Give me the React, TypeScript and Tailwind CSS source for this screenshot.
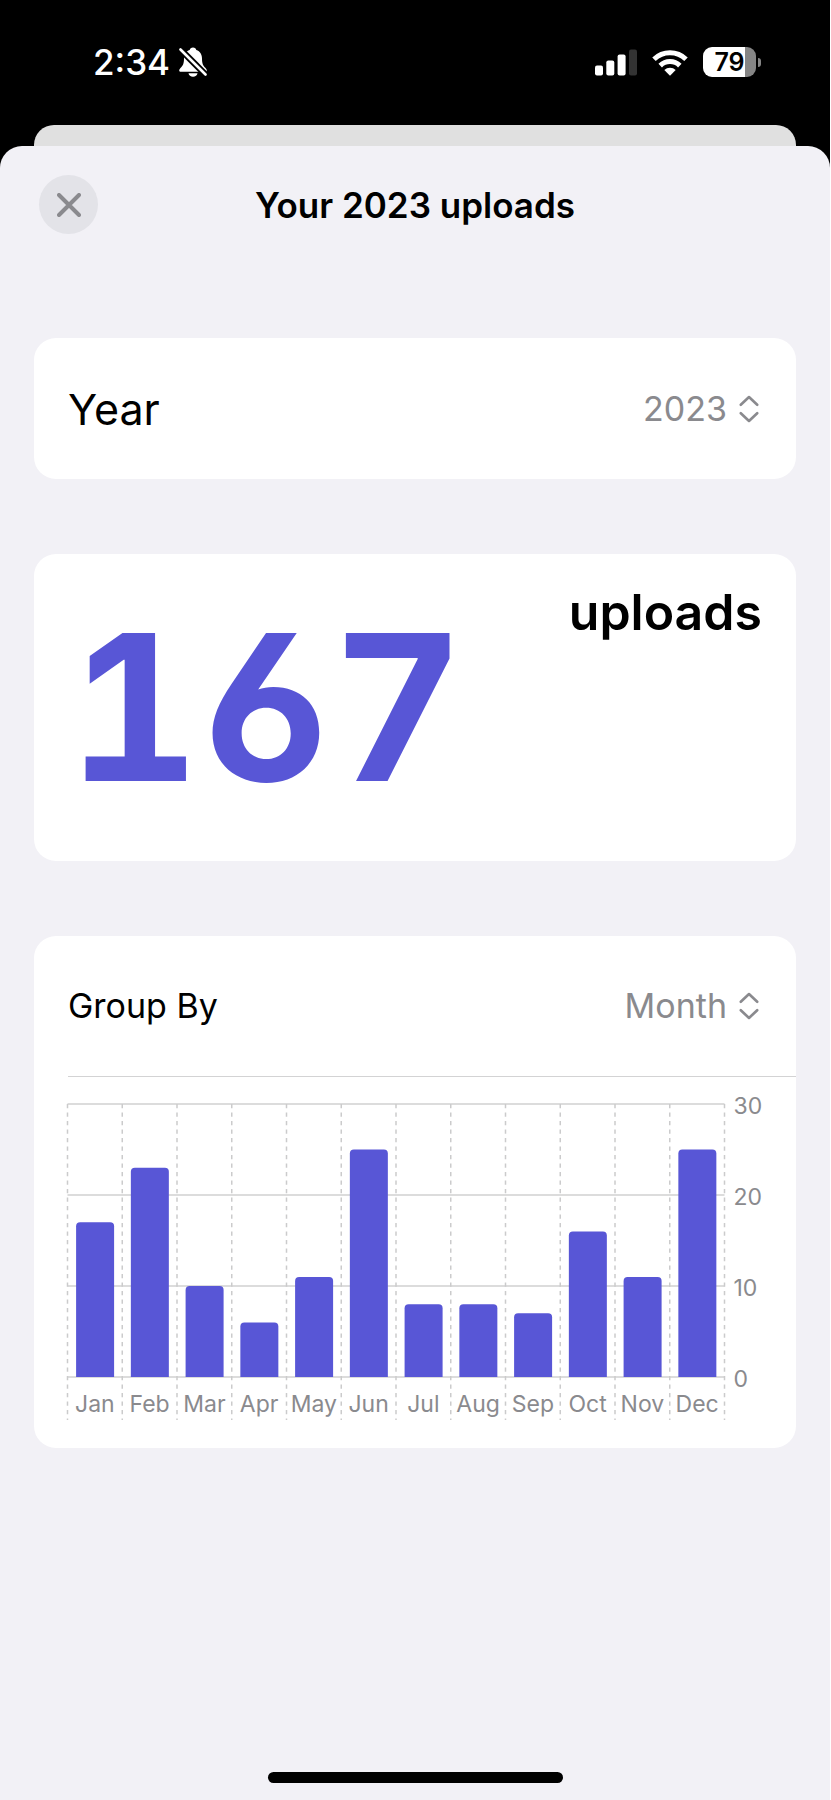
import React, { useState } from "react";

const uploads = [
  { month: "Jan", count: 17 },
  { month: "Feb", count: 23 },
  { month: "Mar", count: 10 },
  { month: "Apr", count: 6 },
  { month: "May", count: 11 },
  { month: "Jun", count: 25 },
  { month: "Jul", count: 8 },
  { month: "Aug", count: 8 },
  { month: "Sep", count: 7 },
  { month: "Oct", count: 16 },
  { month: "Nov", count: 11 },
  { month: "Dec", count: 25 },
];

const total = uploads.reduce((sum, entry) => sum + entry.count, 0);

function BellSlashIcon() {
  return (
    <svg viewBox="0 0 28 30" className="h-[30px] w-[28px]" aria-hidden="true">
      <path
        fill="#fff"
        d="M14 0.5c-1.900 0-3 1-3.300 2.500C6.800 4.200 5 7.600 5 11.500c0 5-1 7-3.300 9.300C.8 21.800.2 22.600.2 23.400c0 .9.700 1.400 1.700 1.400h24.200c1 0 1.700-.5 1.700-1.400 0-.8-.6-1.600-1.500-2.600C24 18.500 23 16.500 23 11.500c0-3.900-1.800-7.300-5.700-8.500C17 1.500 15.900.5 14 .5z"
      />
      <path fill="#fff" d="M9.500 26.300h9c-.3 2.200-2.200 3.500-4.500 3.500s-4.200-1.300-4.500-3.500z" />
      <path stroke="#000" strokeWidth="6.500" d="M-1 0l30 30" />
      <path stroke="#fff" strokeWidth="2.600" strokeLinecap="round" d="M1.500 2.500l25 25" />
    </svg>
  );
}

function SignalIcon() {
  return (
    <svg viewBox="0 0 42 27" className="h-[27px] w-[42px]" aria-hidden="true">
      <rect x="0" y="16.500" width="8" height="10" rx="2" fill="#fff" />
      <rect x="11.300" y="11.500" width="8" height="15" rx="2" fill="#fff" />
      <rect x="22.600" y="5.500" width="8" height="21" rx="2" fill="#fff" />
      <rect x="34" y="0.500" width="8" height="26" rx="2" fill="#333" />
    </svg>
  );
}

function WifiIcon() {
  return (
    <svg viewBox="0 0 36 27" className="h-[27px] w-[36px]" aria-hidden="true">
      <g fill="none" stroke="#fff" strokeWidth="5">
        <path d="M2 10.200a23 23 0 0 1 32 0" />
        <path d="M8.200 16.600a14 14 0 0 1 19.600 0" />
      </g>
      <path fill="#fff" d="M18 26.800l-5.700-5.700a8.200 8.200 0 0 1 11.400 0z" />
    </svg>
  );
}

function Battery() {
  return (
    <div className="flex items-center gap-[2px]" role="img" aria-label="Battery 79 percent">
      <div className="flex h-[30px] w-[53px] items-center justify-center rounded-[9px] bg-[linear-gradient(90deg,#fff_79%,#858585_79%)] text-[25px] leading-none font-semibold text-black">
        79
      </div>
      <div className="h-[9px] w-[3px] rounded-r-full bg-[#858585]" />
    </div>
  );
}

function StatusBar() {
  return (
    <header className="flex h-[125px] items-start justify-between pt-[42px] pr-[69px] pl-[93px] text-white">
      <div className="flex h-[40px] items-center gap-[9px]">
        <time className="text-[35px] leading-none font-medium">2:34</time>
        <BellSlashIcon />
      </div>
      <div className="flex h-[40px] items-center gap-[15px]">
        <SignalIcon />
        <WifiIcon />
        <Battery />
      </div>
    </header>
  );
}

function Picker({ id, options }: { id: string; options: string[] }) {
  const [value, setValue] = useState(options[0]);
  return (
    <div className="relative flex items-center">
      <select
        id={id}
        value={value}
        onChange={(event) => setValue(event.target.value)}
        className="cursor-pointer appearance-none bg-transparent pr-[35px] text-[34px] leading-[44px] text-[#8a8a8e] [text-align-last:right]"
      >
        {options.map((option) => (
          <option key={option}>{option}</option>
        ))}
      </select>
      <svg
        viewBox="0 0 20 28"
        className="pointer-events-none absolute right-[3px] h-[28px] w-[20px]"
        fill="none"
        stroke="#8a8a8e"
        strokeWidth="2.600"
        strokeLinecap="round"
        strokeLinejoin="round"
        aria-hidden="true"
      >
        <path d="M1.800 9.800L10 2l8.200 7.800M1.800 18.200L10 26l8.200-7.800" />
      </svg>
    </div>
  );
}

function UploadsChart() {
  const plotWidth = 657;
  const step = plotWidth / uploads.length;
  const baseline = 273;
  const unit = 9.1;
  return (
    <svg viewBox="0.500 0 694 316" className="block h-auto w-full overflow-visible" role="img" aria-label="Uploads per month">
      {[0, 10, 20, 30].map((tick) => (
        <g key={tick}>
          <line x1="0" x2={plotWidth} y1={baseline - tick * unit} y2={baseline - tick * unit} stroke="#d0d0d1" strokeWidth="1.500" />
          <text x="666" y={baseline - tick * unit + 10} fontSize="23" fill="#8a8a8e">
            {tick}
          </text>
        </g>
      ))}
      {Array.from({ length: uploads.length + 1 }, (_, index) => (
        <line key={index} x1={index * step} x2={index * step} y1="0" y2="316" stroke="#cbcbcc" strokeWidth="1.500" strokeDasharray="4.250 4.250" />
      ))}
      {uploads.map(({ month, count }, index) => {
        const left = index * step + 8.6;
        const top = baseline - count * unit;
        return (
          <g key={month}>
            <path d={`M${left} ${baseline}V${top + 4}q0-4 4-4h30q4 0 4 4V${baseline}z`} fill="#5856d6" />
            <text x={(index + 0.5) * step} y="308" fontSize="23" textAnchor="middle" fill="#8a8a8e">
              {month}
            </text>
          </g>
        );
      })}
    </svg>
  );
}

export default function App() {
  return (
    <div className="min-h-screen bg-white pr-px font-['Inter',sans-serif] text-black">
      <div className="flex min-h-screen flex-col bg-black">
        <StatusBar />
        <div className="mx-[34px] h-[21px] rounded-t-[20px] bg-[#e0e0e0]" />
        <main className="flex flex-1 flex-col rounded-t-[22px] bg-[#f2f1f6] px-[34px]">
          <div className="grid grid-cols-[60px_1fr_60px] items-center px-[5px] pt-[29px]">
            <button type="button" aria-label="Close" className="flex size-[59px] items-center justify-center rounded-full bg-[#e3e3e8]">
              <svg viewBox="0 0 24 24" className="size-[24px]" stroke="#8a8a8e" strokeWidth="4" strokeLinecap="round" aria-hidden="true">
                <path d="M2 2l20 20M22 2L2 22" />
              </svg>
            </button>
            <h1 className="text-center text-[35px] leading-[44px] font-semibold">Your 2023 uploads</h1>
          </div>

          <section className="mt-[104px] flex h-[141px] items-center justify-between rounded-[22px] bg-white px-[34px]">
            <label htmlFor="year" className="text-[43px] leading-[56px]">
              Year
            </label>
            <Picker id="year" options={["2023"]} />
          </section>

          <section className="mt-[75px] flex h-[307px] items-start justify-between rounded-[22px] bg-white px-[34px] pt-[28px]">
            <p className="text-[204px] leading-[250px] font-bold text-[#5856d6] [font-feature-settings:'tnum','cv03']">{total}</p>
            <p className="text-[50px] leading-[60px] font-semibold">uploads</p>
          </section>

          <section className="mt-[75px] rounded-[22px] bg-white pb-[28px]">
            <div className="ml-[34px] flex h-[141px] items-center justify-between border-b border-[#d3d3d4] pr-[34px]">
              <label htmlFor="group-by" className="text-[34px] leading-[44px]">
                Group By
              </label>
              <Picker id="group-by" options={["Month"]} />
            </div>
            <div className="px-[34px] pt-[27px]">
              <UploadsChart />
            </div>
          </section>

          <div className="mt-auto mb-[17px] h-[11px] w-[295px] self-center rounded-full bg-black" />
        </main>
      </div>
    </div>
  );
}
